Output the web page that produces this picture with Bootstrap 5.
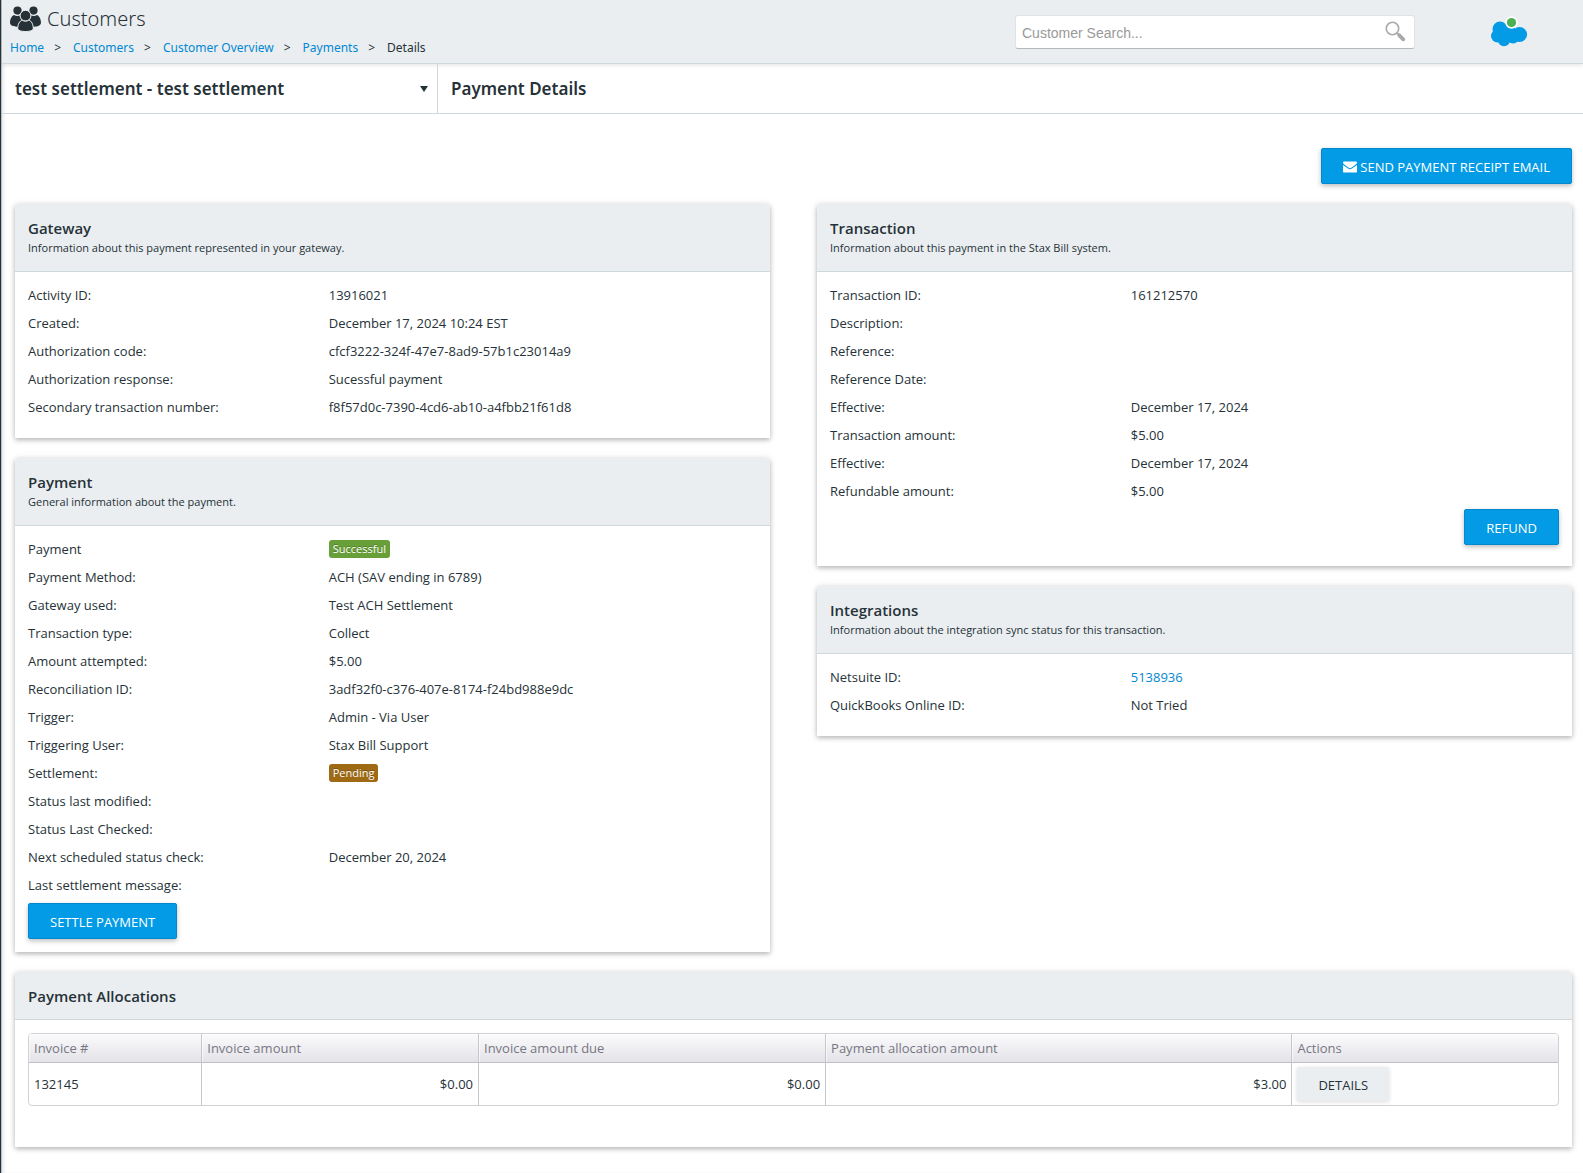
<!DOCTYPE html>
<html lang="en">
<head>
<meta charset="utf-8">
<meta name="viewport" content="width=device-width, initial-scale=1">
<title>Payment Details</title>
<link href="https://cdn.jsdelivr.net/npm/bootstrap@5.3.0/dist/css/bootstrap.min.css" rel="stylesheet">
<style>
:root { --ink: #263238; --line: #cfd8dc; --panel: #eaeef1; --accent: #039be5; --anchor: #0288d1; }
body { font-family: "Open Sans", "Noto Sans", sans-serif; font-size: 13px; line-height: 28px; color: var(--ink); background: #fff; border-left: 1px solid #263238; padding-left: 1px; min-height: 100vh; box-shadow: inset 1px 0 0 #b9bfc2, inset 4px 0 4px -2px rgba(0,0,0,.12); }
a { color: var(--anchor); text-decoration: none; }
a:hover { text-decoration: underline; }

.top-bar { background: var(--panel); border-bottom: 1px solid var(--line); box-shadow: 0 1px 5px rgba(0,0,0,.12); height: 64px; }
.brand-line { padding-top: 5px; gap: 6px; }
.page-name { font-family: "Noto Sans", sans-serif; font-size: 20px; line-height: 28px; font-weight: 300; }
.trail { font-family: "Noto Sans", sans-serif; font-size: 12px; line-height: 20px; padding-top: 5px; --bs-breadcrumb-divider: ">"; --bs-breadcrumb-divider-color: #263238; --bs-breadcrumb-item-active-color: #263238; --bs-breadcrumb-item-padding-x: 10px; }
.trail .breadcrumb-item + .breadcrumb-item::before { padding-right: 12px; }
.search-box { width: 400px; height: 34px; background: #fff; border-radius: 3px; border: 1px solid #e0e3e5; border-bottom-color: #b5b9bb; }
.search-box input { font-family: "Liberation Sans", sans-serif; font-size: 14px; line-height: 20px; padding: 2px 0 0 6px; }
.search-box input::placeholder { color: #999; }
.cloud-cell { width: 168px; padding-left: 20px; }

.title-row { border-bottom: 1px solid var(--line); height: 50px; font-family: "Noto Sans", sans-serif; font-size: 17px; }
.account-pick { width: 436px; border-right: 1px solid var(--line); padding: 0 9px 0 13px; }
.account-pick select { appearance: none; border: 0; background: none; font: inherit; font-weight: 600; color: inherit; padding: 0; }
.title-row h1 { font-size: 17px; font-weight: 600; line-height: 28px; padding-left: 13px; }

.page-body { padding: 34px 11px 26px 13px; }
.send-row { margin-bottom: 20px; }
.btn-flat { font-size: 13px; line-height: 18px; padding: 9px 21px 7px; border-radius: 2px; text-transform: uppercase; --bs-btn-color: #fff; --bs-btn-bg: var(--accent); --bs-btn-border-color: #0288d1; --bs-btn-hover-color: #fff; --bs-btn-hover-bg: #0288d1; --bs-btn-hover-border-color: #0277bd; box-shadow: 0 2px 5px rgba(0,0,0,.26); }
.btn-pale { padding: 8px 20px 6px; --bs-btn-color: #263238; --bs-btn-bg: var(--panel); --bs-btn-border-color: var(--panel); --bs-btn-hover-color: #263238; --bs-btn-hover-bg: #dfe5e8; --bs-btn-hover-border-color: #dfe5e8; box-shadow: 0 1px 4px rgba(0,0,0,.14); }
.btn-mail { gap: 3px; }
.columns { display: grid; grid-template-columns: 1fr 1fr; gap: 47px; }
.panel { border: 0; border-radius: 3px 3px 0 0; box-shadow: 0 2px 5px rgba(0,0,0,.26), 0 0 8px rgba(0,0,0,.07); margin-bottom: 20px; }
.panel .card-header { background: var(--panel); border-bottom: 1px solid var(--line); padding: 14px 13px 13px; border-radius: 3px 3px 0 0; }
.panel h2 { font-size: 15px; line-height: 20px; font-weight: 600; margin: 0; }
.panel .card-header p { font-size: 11px; line-height: 20px; margin: 0; }
.panel .card-body { padding: 9px 13px 13px; }
.panel .table-area { padding: 13px 13px 41px; }
.facts { margin: 0 0 4px; }
.facts dt { flex: 0 0 41.25%; font-weight: 400; }
.facts dd { margin: 0; }
.facts > div { height: 28px; }
.state { font-size: 11px; line-height: 18px; font-weight: 400; padding: 0 4px; border-radius: 3px; text-shadow: 0 -1px 0 rgba(0,0,0,.25); }
.state-ok { background: #689f38; }
.state-wait { background: #9e6a14; }

.grid-frame { border: 1px solid #d0d0d6; border-radius: 4px; overflow: hidden; }
.ledger { width: 100%; table-layout: fixed; line-height: 20px; }
.ledger th { font-weight: 400; color: #777683; background: linear-gradient(#fbfbfc, #e3e3e8); border-bottom: 1px solid #bfbfc8; border-left: 1px solid #c6c6ce; padding: 4px 5px 4px; box-shadow: inset 1px 1px 0 rgba(255,255,255,.6); }
.ledger td { border-left: 1px solid #c6c6ce; padding: 3px 5px; height: 42px; vertical-align: middle; }
.ledger th:first-child, .ledger td:first-child { border-left: 0; }
</style>
</head>
<body>
<header class="top-bar d-flex align-items-start">
  <div class="flex-grow-1 ps-2">
    <div class="brand-line d-flex align-items-center">
      <svg width="31" height="26" viewBox="0 0 31 26" fill="#263238" aria-hidden="true">
        <circle cx="7.5" cy="4.6" r="4.1"/><circle cx="23.5" cy="4.6" r="4.1"/>
        <path d="M0 17c0-4 1.800-7.500 4.200-8 1.200 1 3.800 1.200 5.600.6.200 2 1 3.700 2.300 4.900-2.400.9-3.800 3-4.200 6.300C4.500 20.600.6 20.300 0 17zM31 17c0-4-1.800-7.500-4.200-8-1.200 1-3.800 1.200-5.600.6-.2 2-1 3.700-2.300 4.900 2.400.9 3.800 3 4.200 6.300 3.400-.2 7.300-.5 7.900-3.800z"/>
        <circle cx="15.5" cy="9.700" r="5.400" stroke="#eaeef1"/>
        <path stroke="#eaeef1" d="M7.700 23c0-4.500 1.700-8.200 4.600-8.800 1.700 1.300 4.700 1.300 6.400 0 2.900.6 4.600 4.300 4.600 8.800-1.100 3.400-14.500 3.400-15.600 0z"/>
      </svg>
      <span class="page-name">Customers</span>
    </div>
    <nav aria-label="breadcrumb">
      <ol class="breadcrumb trail mb-0">
        <li class="breadcrumb-item"><a href="#">Home</a></li>
        <li class="breadcrumb-item"><a href="#">Customers</a></li>
        <li class="breadcrumb-item"><a href="#">Customer Overview</a></li>
        <li class="breadcrumb-item"><a href="#">Payments</a></li>
        <li class="breadcrumb-item active" aria-current="page">Details</li>
      </ol>
    </nav>
  </div>
  <form class="search-box d-flex align-items-center align-self-center" role="search">
    <input type="text" class="form-control border-0 shadow-none bg-transparent" placeholder="Customer Search..." aria-label="Customer Search">
    <button type="button" class="border-0 bg-transparent d-flex p-0 me-2" aria-label="Search">
      <svg width="21" height="21" viewBox="0 0 21 21" fill="none" stroke="#a9a9a9" aria-hidden="true"><circle cx="7.5" cy="7.5" r="6.2" stroke-width="1.6"/><path d="M12 12l2.500 2.500" stroke-width="1.8"/><path d="M14.300 14.300l4 4" stroke-width="3.8" stroke-linecap="round"/></svg>
    </button>
  </form>
  <div class="cloud-cell d-flex justify-content-center align-self-center">
    <svg width="38" height="32" viewBox="0 0 38 32" role="img" aria-label="Salesforce connected">
      <g fill="#039be5"><circle cx="10" cy="13" r="7.5"/><circle cx="7.5" cy="20" r="6.5"/><circle cx="14" cy="24" r="6.2"/><circle cx="29.5" cy="18.5" r="7.6"/><circle cx="23" cy="21" r="6.5"/><circle cx="18" cy="16" r="8"/></g>
      <circle cx="21.5" cy="6.5" r="6.2" fill="#fff"/><circle cx="21.5" cy="6.5" r="4.6" fill="#4caf50"/>
    </svg>
  </div>
</header>

<div class="title-row d-flex align-items-stretch">
  <div class="account-pick d-flex align-items-center">
    <select class="flex-grow-1" aria-label="Account"><option>test settlement - test settlement</option></select>
    <svg width="8" height="6" viewBox="0 0 8 6" aria-hidden="true"><path d="M0 0h8L4 6z" fill="#263238"/></svg>
  </div>
  <div class="d-flex align-items-center"><h1 class="mb-0">Payment Details</h1></div>
</div>

<main class="page-body">
  <div class="send-row d-flex justify-content-end">
    <button type="button" class="btn btn-flat btn-mail d-flex align-items-center">
      <svg width="14" height="12" viewBox="0 0 14 12" fill="#fff" aria-hidden="true"><path d="M0 1.500C0 .7.600.500 1.200.500h11.600c.6 0 1.200.2 1.200 1-.1 1-.8 1.700-1.600 2.300L8.300 6.700c-.8.600-1.800.6-2.600 0L1.600 3.800C.8 3.200.1 2.500 0 1.500z"/><path d="M0 4l5 3.600c1.200.9 2.800.9 4 0L14 4v6.500c0 .6-.4 1-1 1H1c-.6 0-1-.4-1-1z"/></svg>
      <span>Send Payment Receipt Email</span>
    </button>
  </div>

  <div class="columns">
    <div>
      <section class="card panel">
        <div class="card-header"><h2>Gateway</h2><p>Information about this payment represented in your gateway.</p></div>
        <div class="card-body">
          <dl class="facts">
            <div class="d-flex"><dt>Activity ID:</dt><dd>13916021</dd></div>
            <div class="d-flex"><dt>Created:</dt><dd>December 17, 2024 10:24 EST</dd></div>
            <div class="d-flex"><dt>Authorization code:</dt><dd>cfcf3222-324f-47e7-8ad9-57b1c23014a9</dd></div>
            <div class="d-flex"><dt>Authorization response:</dt><dd>Sucessful payment</dd></div>
            <div class="d-flex"><dt>Secondary transaction number:</dt><dd>f8f57d0c-7390-4cd6-ab10-a4fbb21f61d8</dd></div>
          </dl>
        </div>
      </section>
      <section class="card panel">
        <div class="card-header"><h2>Payment</h2><p>General information about the payment.</p></div>
        <div class="card-body">
          <dl class="facts">
            <div class="d-flex"><dt>Payment</dt><dd class="d-flex align-items-center"><span class="badge state state-ok">Successful</span></dd></div>
            <div class="d-flex"><dt>Payment Method:</dt><dd>ACH (SAV ending in 6789)</dd></div>
            <div class="d-flex"><dt>Gateway used:</dt><dd>Test ACH Settlement</dd></div>
            <div class="d-flex"><dt>Transaction type:</dt><dd>Collect</dd></div>
            <div class="d-flex"><dt>Amount attempted:</dt><dd>$5.00</dd></div>
            <div class="d-flex"><dt>Reconciliation ID:</dt><dd>3adf32f0-c376-407e-8174-f24bd988e9dc</dd></div>
            <div class="d-flex"><dt>Trigger:</dt><dd>Admin - Via User</dd></div>
            <div class="d-flex"><dt>Triggering User:</dt><dd>Stax Bill Support</dd></div>
            <div class="d-flex"><dt>Settlement:</dt><dd class="d-flex align-items-center"><span class="badge state state-wait">Pending</span></dd></div>
            <div class="d-flex"><dt>Status last modified:</dt><dd></dd></div>
            <div class="d-flex"><dt>Status Last Checked:</dt><dd></dd></div>
            <div class="d-flex"><dt>Next scheduled status check:</dt><dd>December 20, 2024</dd></div>
            <div class="d-flex"><dt>Last settlement message:</dt><dd></dd></div>
          </dl>
          <div class="d-flex"><button type="button" class="btn btn-flat">Settle Payment</button></div>
        </div>
      </section>
    </div>
    <div>
      <section class="card panel">
        <div class="card-header"><h2>Transaction</h2><p>Information about this payment in the Stax Bill system.</p></div>
        <div class="card-body">
          <dl class="facts">
            <div class="d-flex"><dt>Transaction ID:</dt><dd>161212570</dd></div>
            <div class="d-flex"><dt>Description:</dt><dd></dd></div>
            <div class="d-flex"><dt>Reference:</dt><dd></dd></div>
            <div class="d-flex"><dt>Reference Date:</dt><dd></dd></div>
            <div class="d-flex"><dt>Effective:</dt><dd>December 17, 2024</dd></div>
            <div class="d-flex"><dt>Transaction amount:</dt><dd>$5.00</dd></div>
            <div class="d-flex"><dt>Effective:</dt><dd>December 17, 2024</dd></div>
            <div class="d-flex"><dt>Refundable amount:</dt><dd>$5.00</dd></div>
          </dl>
          <div class="d-flex justify-content-end mb-2"><button type="button" class="btn btn-flat">Refund</button></div>
        </div>
      </section>
      <section class="card panel">
        <div class="card-header"><h2>Integrations</h2><p>Information about the integration sync status for this transaction.</p></div>
        <div class="card-body">
          <dl class="facts">
            <div class="d-flex"><dt>Netsuite ID:</dt><dd><a href="#">5138936</a></dd></div>
            <div class="d-flex"><dt>QuickBooks Online ID:</dt><dd>Not Tried</dd></div>
          </dl>
        </div>
      </section>
    </div>
  </div>

  <section class="card panel mb-0">
    <div class="card-header"><h2>Payment Allocations</h2></div>
    <div class="card-body table-area">
      <div class="grid-frame">
        <table class="ledger">
          <colgroup><col style="width:11.3%"><col style="width:18.1%"><col style="width:22.7%"><col style="width:30.5%"><col></colgroup>
          <thead><tr><th>Invoice #</th><th>Invoice amount</th><th>Invoice amount due</th><th>Payment allocation amount</th><th>Actions</th></tr></thead>
          <tbody><tr><td>132145</td><td class="text-end">$0.00</td><td class="text-end">$0.00</td><td class="text-end">$3.00</td><td><button type="button" class="btn btn-flat btn-pale">Details</button></td></tr></tbody>
        </table>
      </div>
    </div>
  </section>
</main>
<script src="https://cdn.jsdelivr.net/npm/bootstrap@5.3.0/dist/js/bootstrap.bundle.min.js"></script>
</body>
</html>
